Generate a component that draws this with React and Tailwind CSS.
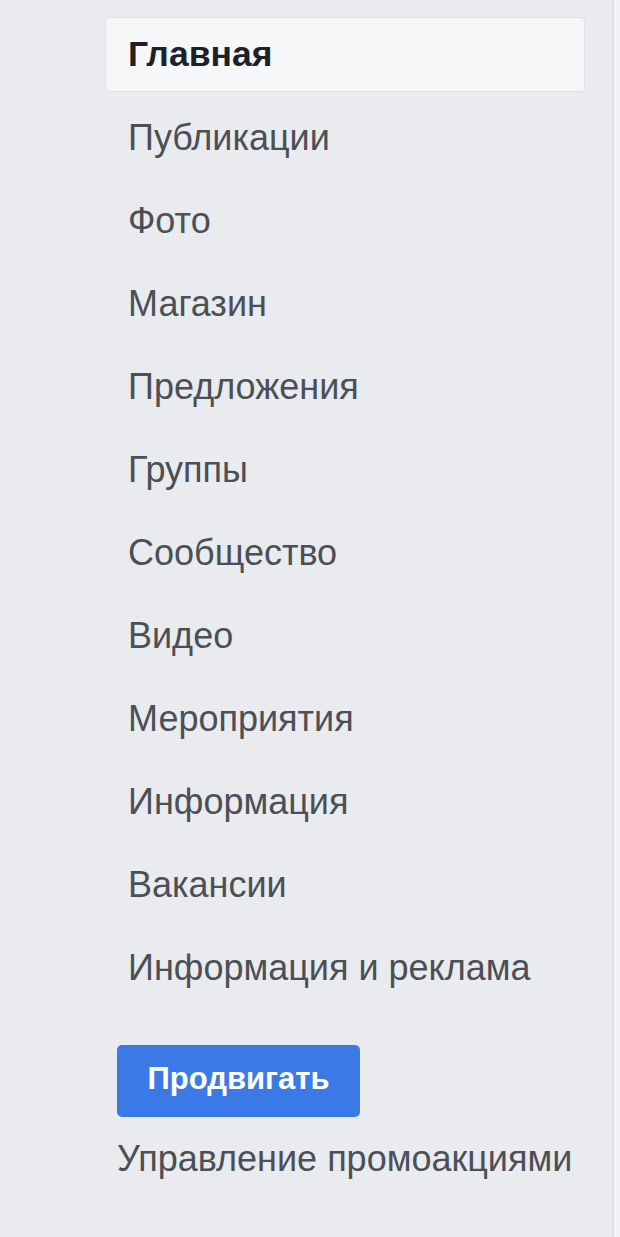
import React from "react";

const items = [
  "Главная",
  "Публикации",
  "Фото",
  "Магазин",
  "Предложения",
  "Группы",
  "Сообщество",
  "Видео",
  "Мероприятия",
  "Информация",
  "Вакансии",
  "Информация и реклама",
];

export default function App() {
  return (
    <div
      className="flex min-h-[1237px] w-[620px] bg-[#e9ebee]"
      style={{ fontFamily: '"Liberation Sans", Arial, sans-serif' }}
    >
      <div className="flex-1 pl-[105px] pt-[17px]">
        <nav className="flex w-[480px] flex-col gap-[8px]">
          {items.map((label, i) => (
            <div
              key={label}
              className={
                i === 0
                  ? "flex h-[75px] items-center rounded-[4px] border border-[#dfe1e5] bg-[#f6f7f9] pl-[22px] text-[35.5px] font-bold text-[#1d2129]"
                  : "flex h-[75px] items-center border border-transparent pl-[22px] text-[36px] text-[#4b4f56]"
              }
            >
              {label}
            </div>
          ))}
        </nav>

        <div className="mt-[40px] pl-[12px]">
          <button className="flex h-[72px] w-[243px] items-center justify-center rounded-[5px] bg-[#3b7ae6] pb-[4px] text-[31px] font-bold text-white">
            Продвигать
          </button>
          <div className="mt-[22px] text-[36px] leading-[40px] text-[#4b4f56]">
            Управление промоакциями
          </div>
        </div>
      </div>
      <div className="w-[8px] border-l-2 border-[#dfe0e3] bg-[#f1f2f4]" />
    </div>
  );
}
